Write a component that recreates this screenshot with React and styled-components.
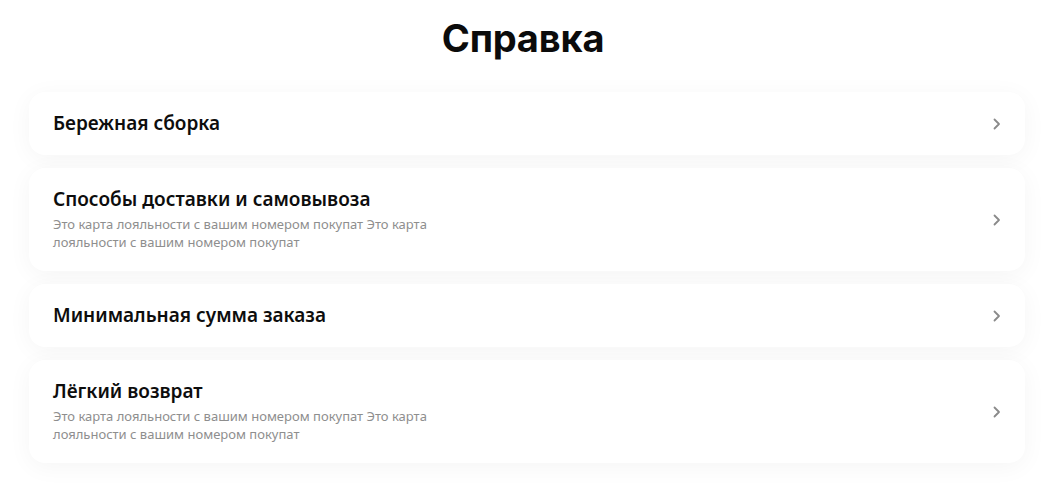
import React from "react";
import styled, { createGlobalStyle } from "styled-components";

const Global = createGlobalStyle`
  html, body { margin: 0; padding: 0; background: #ffffff; }
  body { font-family: "Noto Sans", "Open Sans", sans-serif; color: #111; }
`;

const Page = styled.div`
  padding: 12px 20px 40px 29px;
  display: flex;
  flex-direction: column;
`;

const Title = styled.h1`
  margin: 0 0 28px;
  text-align: center;
  font-family: "Inter", "Noto Sans", sans-serif;
  font-size: 38px;
  line-height: 52px;
  font-weight: 700;
  color: #0b0b0b;
  letter-spacing: -0.2px;
  transform: translateX(-4px);
`;

const List = styled.div`
  display: flex;
  flex-direction: column;
  gap: 13px;
`;

const Card = styled.div`
  background: #fff;
  border-radius: 16px;
  box-shadow: 0 4px 24px rgba(0, 0, 0, 0.045);
  padding: 20px 24px 20px 24px;
  display: flex;
  align-items: center;
  justify-content: space-between;
  min-height: 23px;
`;

const Texts = styled.div`
  display: flex;
  flex-direction: column;
  gap: 4px;
`;

const CardTitle = styled.div`
  font-size: 19px;
  line-height: 23px;
  font-weight: 600;
  color: #0d0d0d;
`;

const CardText = styled.div`
  font-size: 13px;
  line-height: 18px;
  color: #8e8e8e;
  max-width: 390px;
`;

const Chevron = styled.svg`
  width: 8px;
  height: 12px;
  flex: none;
`;

const items = [
  { title: "Бережная сборка" },
  {
    title: "Способы доставки и самовывоза",
    text: "Это карта лояльности с вашим номером покупат Это карта лояльности с вашим номером покупат",
  },
  { title: "Минимальная сумма заказа" },
  {
    title: "Лёгкий возврат",
    text: "Это карта лояльности с вашим номером покупат Это карта лояльности с вашим номером покупат",
  },
];

export default function App() {
  return (
    <>
      <Global />
      <Page>
        <Title>Справка</Title>
        <List>
          {items.map((it) => (
            <Card key={it.title}>
              <Texts>
                <CardTitle>{it.title}</CardTitle>
                {it.text && <CardText>{it.text}</CardText>}
              </Texts>
              <Chevron viewBox="0 0 8 12">
                <path d="M1.5 1.5 L6 6 L1.5 10.5" fill="none" stroke="#8a8a8a" strokeWidth="1.8" strokeLinecap="round" strokeLinejoin="round" />
              </Chevron>
            </Card>
          ))}
        </List>
      </Page>
    </>
  );
}
